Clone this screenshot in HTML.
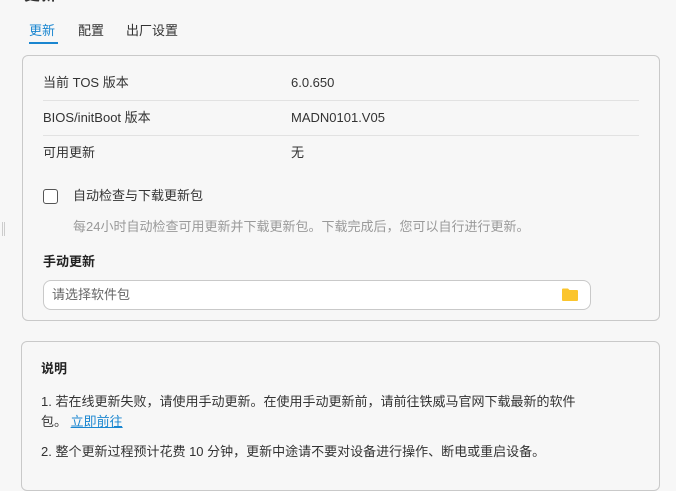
<!DOCTYPE html><html><head><meta charset="utf-8"><style>
*{margin:0;padding:0;box-sizing:border-box}
body{width:676px;height:475px;overflow:hidden;background:#f7f7f7;font-family:"Liberation Sans","Noto Sans CJK SC",sans-serif;font-size:13px;line-height:16px;color:#333;position:relative}
.a{position:absolute;white-space:nowrap;line-height:16px}
.card{position:absolute;border:1px solid #c9c9c9;border-radius:6px;background:#f7f7f7}
.hr{position:absolute;left:43px;width:596px;height:1px;background:#e2e2e2}
</style></head><body>
<div class="a" style="left:24px;top:-12px;font-size:16px;font-weight:bold;color:#333">更新</div>
<div class="a" style="left:29px;top:23px;color:#1a86d0">更新</div>
<div class="a" style="left:29px;top:42px;width:29px;height:2px;background:#1a86d0"></div>
<div class="a" style="left:78px;top:23px">配置</div>
<div class="a" style="left:126px;top:23px">出厂设置</div>
<div class="a" style="left:2px;top:222px;width:3px;height:14px;border-left:1px solid #ccc;border-right:1px solid #ccc"></div>
<div class="card" style="left:22px;top:55px;width:638px;height:266px"></div>
<div class="a" style="left:43px;top:75px">当前 TOS 版本</div><div class="a" style="left:291px;top:75px">6.0.650</div>
<div class="hr" style="top:100px"></div>
<div class="a" style="left:43px;top:110px">BIOS/initBoot 版本</div><div class="a" style="left:291px;top:110px">MADN0101.V05</div>
<div class="hr" style="top:135px"></div>
<div class="a" style="left:43px;top:145px">可用更新</div><div class="a" style="left:291px;top:145px">无</div>
<div class="a" style="left:43px;top:189px;width:15px;height:15px;border:1.5px solid #555;border-radius:3px;background:#fff"></div>
<div class="a" style="left:73px;top:188px">自动检查与下载更新包</div>
<div class="a" style="left:73px;top:219px;color:#999">每24小时自动检查可用更新并下载更新包。下载完成后，您可以自行进行更新。</div>
<div class="a" style="left:43px;top:254px;font-weight:bold;color:#222">手动更新</div>
<div class="a" style="left:43px;top:280px;width:548px;height:30px;border:1px solid #c9c9c9;border-radius:8px;background:#fff"></div>
<div class="a" style="left:52px;top:287px;color:#666">请选择软件包</div>
<svg class="a" style="left:561px;top:287px" width="18" height="15" viewBox="0 0 18 15"><path d="M1 2.5Q1 1.5 2 1.5H7L8.5 3H16Q17 3 17 4V13Q17 14 16 14H2Q1 14 1 13Z" fill="#fbc52d"/></svg>
<div class="card" style="left:21px;top:341px;width:639px;height:150px"></div>
<div class="a" style="left:41px;top:361px;font-weight:bold;color:#222">说明</div>
<div class="a" style="left:41px;top:394px">1. 若在线更新失败，请使用手动更新。在使用手动更新前，请前往铁威马官网下载最新的软件</div>
<div class="a" style="left:41px;top:414px">包。 <span style="color:#1a86d0;text-decoration:underline">立即前往</span></div>
<div class="a" style="left:41px;top:444px">2. 整个更新过程预计花费 10 分钟，更新中途请不要对设备进行操作、断电或重启设备。</div>
</body></html>
